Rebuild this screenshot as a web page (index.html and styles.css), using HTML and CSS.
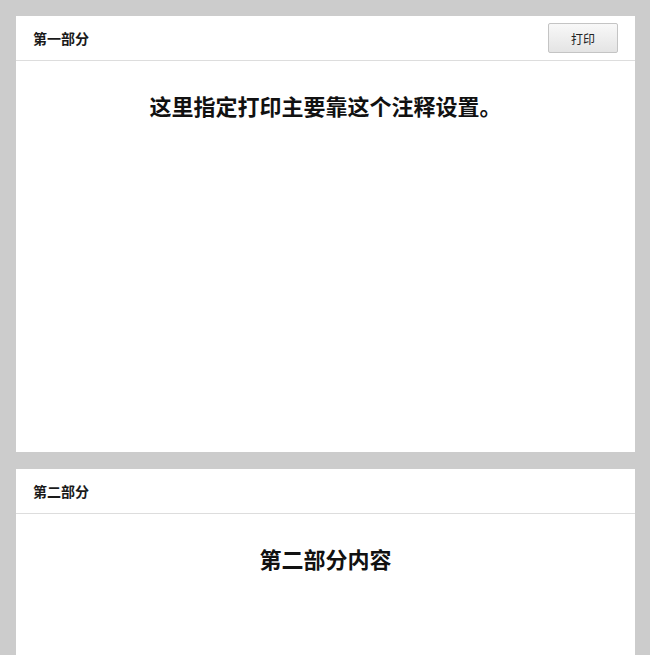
FILE: index.html
```html
<!DOCTYPE html>
<html lang="zh">
<head>
<meta charset="utf-8">
<title>打印</title>
<link rel="stylesheet" href="styles.css">
</head>
<body>
<div class="page">
  <section class="card card-first">
    <header class="card-head">
      <span class="card-title">第一部分</span>
      <button class="btn" type="button">打印</button>
    </header>
    <div class="card-body">
      <h2 class="content-title">这里指定打印主要靠这个注释设置。</h2>
    </div>
  </section>
  <section class="card card-second">
    <header class="card-head">
      <span class="card-title">第二部分</span>
    </header>
    <div class="card-body">
      <h2 class="content-title">第二部分内容</h2>
    </div>
  </section>
</div>
</body>
</html>
```
FILE: styles.css
```css
html, body {
  margin: 0;
  padding: 0;
  background: #cccccc;
  height: 100%;
  overflow: hidden;
}
.page {
  padding: 16px 15px 0 16px;
  display: flex;
  flex-direction: column;
  gap: 17px;
  font-family: "Liberation Serif", "Noto Sans CJK SC", serif;
  color: #111;
}
.card {
  background: #ffffff;
  display: flex;
  flex-direction: column;
}
.card-first {
  height: 436px;
}
.card-second {
  height: 186px;
}
.card-head {
  height: 45px;
  box-sizing: border-box;
  border-bottom: 1px solid #dddddd;
  display: flex;
  align-items: center;
  justify-content: space-between;
  padding: 0 17px 0 17px;
}
.card-title {
  font-family: "Noto Sans CJK SC", sans-serif;
  font-size: 14px;
  font-weight: 600;
  color: #1a1a1a;
}
.btn {
  width: 70px;
  height: 30px;
  border: 1px solid #c4c4c4;
  border-radius: 2px;
  background: linear-gradient(#f8f8f8, #e4e4e4);
  font-family: "Noto Sans CJK SC", sans-serif;
  font-size: 12px;
  color: #222;
  padding: 0;
}
.card-body {
  padding-top: 28px;
}
.content-title {
  margin: 0;
  text-align: center;
  font-family: "Noto Sans CJK SC", serif;
  font-size: 22px;
  line-height: 32px;
  font-weight: 600;
  color: #111;
}
```
